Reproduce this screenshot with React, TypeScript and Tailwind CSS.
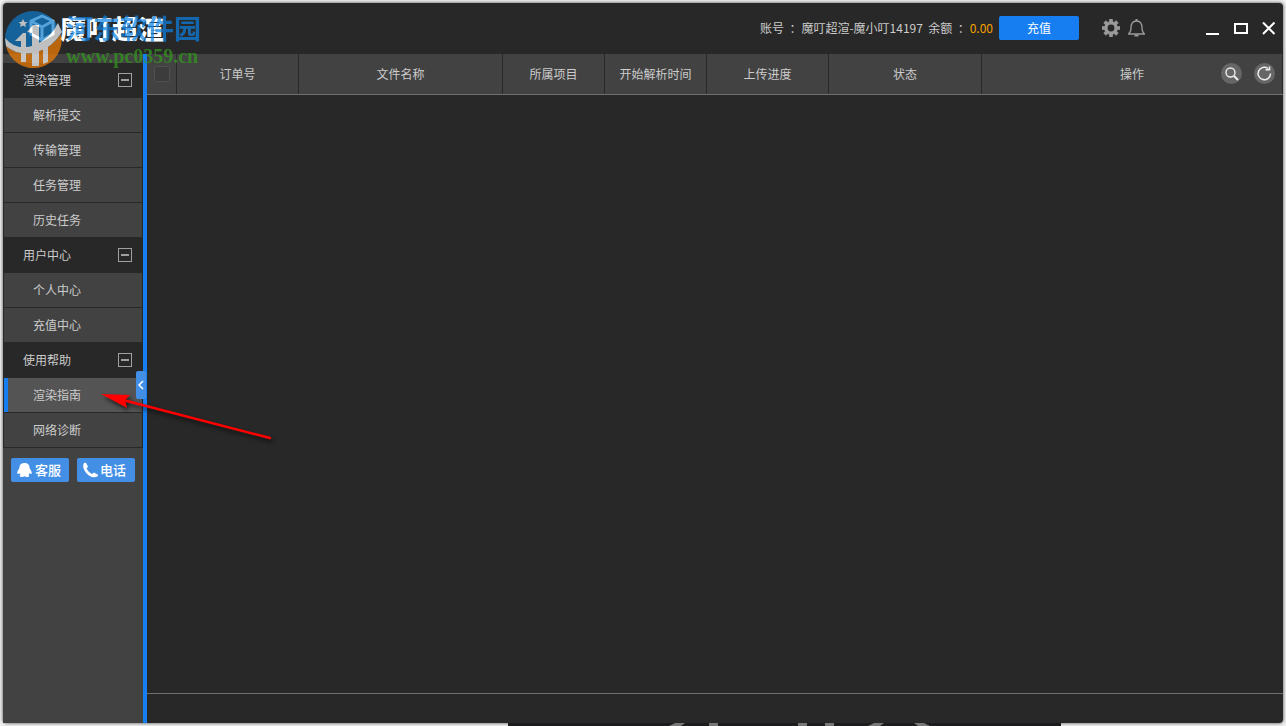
import { useState } from "react";

type Group = { title: string; items: string[] };

const groups: Group[] = [
  { title: "渲染管理", items: ["解析提交", "传输管理", "任务管理", "历史任务"] },
  { title: "用户中心", items: ["个人中心", "充值中心"] },
  { title: "使用帮助", items: ["渲染指南", "网络诊断"] },
];

const columns = [
  { label: "订单号", width: "w-[122px]" },
  { label: "文件名称", width: "w-[204px]" },
  { label: "所属项目", width: "w-[102px]" },
  { label: "开始解析时间", width: "w-[102px]" },
  { label: "上传进度", width: "w-[122px]" },
  { label: "状态", width: "w-[153px]" },
];

function Logo() {
  return (
    <div className="relative flex h-[50px] items-center pl-[25px]">
      <svg width="28" height="30" viewBox="0 0 28 30" fill="none" stroke="#fff" strokeWidth="3" strokeLinejoin="round">
        <path d="M14 3 25 8v13l-11 6L3 21V8z" />
        <path d="M3 8l11 6 11-6M14 14v13" />
      </svg>
      <h1 className="ml-1 whitespace-nowrap text-[26px] leading-8 font-black text-white">魔叮超渲</h1>

      {/* download site stamp over the logo */}
      <div className="pointer-events-none absolute top-[7px] left-[2px] z-20 flex opacity-70">
        <svg width="57" height="58" viewBox="0 0 57 58">
          <circle cx="28" cy="29" r="28" fill="#0d7bcb" />
          <path d="M1 36Q14 47 32 42 46 38 56 24A28 28 0 0 1 1 36z" fill="#f68004" />
          <path d="M0 28Q12 42 30 35 46 28 53 13L57 22Q47 38 32 42 14 47 1 36z" fill="#fff" />
          <path d="M10 31l8-8h3v29h-5V31z" fill="#fff" />
          <path d="M22 22l6-7h6v41h-7V23z" fill="#fff" />
          <path d="M38 36h5v16l-5 2z" fill="#fff" />
          <path d="M18 9l1.500 3h3l-2.300 2 .8 3-3-1.600-3 1.600.8-3-2.300-2h3z" fill="#fff" />
        </svg>
        <div className="whitespace-nowrap pl-[2px]">
          <p className="pl-[2px] text-[27px] leading-[36px] font-bold text-[#0c83e4]">河东软件园</p>
          <p className="pl-[2px] font-['Liberation_Serif',serif] text-[20px] leading-5 font-bold text-[#329d1c]">www.pc0359.cn</p>
        </div>
      </div>
    </div>
  );
}

function TitleBar() {
  return (
    <header className="flex h-[51px] shrink-0 justify-between">
      <Logo />
      <div className="flex h-[50px] items-center">
        <p className="whitespace-pre">
          账号&nbsp; ：魔叮超渲-魔小叮14197&nbsp; 余额&nbsp; ：<span className="text-[#f5a000]">0.00</span>
        </p>
        <button className="ml-[6px] h-6 w-20 rounded-xs bg-[#177ef2] text-white">充值</button>
        <button aria-label="设置" className="ml-[22px]">
          <svg width="20" height="20" viewBox="0 0 20 20">
            <g fill="#999">
              <path d="M8.2 1h3.6v18H8.2z" />
              <path d="M8.2 1h3.6v18H8.2z" transform="rotate(45 10 10)" />
              <path d="M8.2 1h3.6v18H8.2z" transform="rotate(90 10 10)" />
              <path d="M8.2 1h3.6v18H8.2z" transform="rotate(135 10 10)" />
              <circle cx="10" cy="10" r="6.8" />
            </g>
            <circle cx="10" cy="10" r="3.4" fill="#282828" />
          </svg>
        </button>
        <button aria-label="消息" className="ml-[6px]">
          <svg width="19" height="20" viewBox="0 0 19 20" fill="none" stroke="#999" strokeWidth="1.3">
            <path d="M1.5 16q2.5-2 2.5-6 0-7 5.500-7T15 10q0 4 2.500 6z" strokeLinejoin="round" />
            <path d="M9.500 1v2M7.500 17.500h4" strokeWidth="2" />
          </svg>
        </button>
        <button aria-label="最小化" className="ml-[58px]">
          <svg width="16" height="16" viewBox="0 0 16 16">
            <path d="M2 14h13" stroke="#fff" strokeWidth="2" />
          </svg>
        </button>
        <button aria-label="最大化" className="ml-[13px]">
          <svg width="16" height="16" viewBox="0 0 16 16">
            <path d="M2 4h12v9H2z" fill="none" stroke="#fff" strokeWidth="2" />
          </svg>
        </button>
        <button aria-label="关闭" className="mr-[6px] ml-[12px]">
          <svg width="16" height="16" viewBox="0 0 16 16">
            <path d="M2 2.500l11.500 11.500M13.500 2.500L2 14" stroke="#fff" strokeWidth="2" />
          </svg>
        </button>
      </div>
    </header>
  );
}

function Sidebar() {
  const [active, setActive] = useState("渲染指南");
  const [closed, setClosed] = useState<string[]>([]);

  function toggle(title: string) {
    setClosed((c) => (c.includes(title) ? c.filter((t) => t !== title) : [...c, title]));
  }

  return (
    <aside className="relative flex w-36 shrink-0 flex-col border-r-4 border-[#177ef2] bg-[#424242] pt-[9px]">
      <nav className="bg-[#282828] px-px">
        {groups.map((g) => (
          <section key={g.title}>
            <div className="flex h-[35px] items-center justify-between pr-[10px] pb-px pl-[19px]">
              <h2>{g.title}</h2>
              <button
                aria-label={g.title}
                onClick={() => toggle(g.title)}
                className="flex h-[14px] w-[14px] items-center justify-center border border-[#a0a0a0]"
              >
                <span className="h-[2px] w-2 bg-[#a0a0a0]" />
              </button>
            </div>
            {!closed.includes(g.title) && (
              <ul>
                {g.items.map((item) => (
                  <li key={item} className="border-b border-[#282828]">
                    <a
                      href="#"
                      onClick={() => setActive(item)}
                      className={
                        item === active
                          ? "flex h-[34px] items-center border-l-4 border-[#177ef2] bg-[#545454] pl-[25px]"
                          : "flex h-[34px] items-center bg-[#424242] pl-[29px]"
                      }
                    >
                      {item}
                    </a>
                  </li>
                ))}
              </ul>
            )}
          </section>
        ))}
      </nav>

      <div className="flex gap-2 px-2 pt-[10px] text-[13px] font-medium text-white">
        <button className="flex h-6 flex-1 items-center gap-[2px] rounded-xs bg-[#448fe6] pl-[5px]">
          <svg width="17" height="16" viewBox="0 0 15 16" fill="#fff" preserveAspectRatio="none">
            <path d="M7.500 1C4.500 1 3 3 3 5.500c0 1-.4 1.500-1 2.500-.9 1.500-1.200 3.200-.5 4 .5.3 1-.5 1.300-1 .3.900.7 1.400 1.200 2-1 .4-1 2 1.200 2 1 0 1.700-.3 2.300-.7.600.4 1.300.7 2.300.7 2.200 0 2.200-1.600 1.200-2 .5-.6.900-1.100 1.200-2 .3.500.8 1.300 1.300 1 .7-.8.4-2.500-.5-4-.6-1-1-1.500-1-2.500C12 3 10.500 1 7.500 1z" />
          </svg>
          客服
        </button>
        <button className="flex h-6 flex-1 items-center gap-px rounded-xs bg-[#448fe6] pl-[5px]">
          <svg width="17" height="16" viewBox="0 0 17 16" fill="#fff">
            <path d="M2 1l2-.2 2 4-1.500 1.800q2 4 5.500 5.400l2-1.500 4 2.200-.3 1.600q-3 2-7 .2Q3 11.500 1.300 5.500 1 2.500 2 1z" />
          </svg>
          电话
        </button>
      </div>

      {/* collapse handle sits over the blue edge */}
      <button
        aria-label="收起"
        className="absolute top-[317px] right-[-3px] z-10 flex h-7 w-[10px] items-center justify-center rounded-xs bg-[#448fe6]"
      >
        <svg width="6" height="10" viewBox="0 0 6 10" fill="none" stroke="#fff" strokeWidth="1.500">
          <path d="M5 1L1 5l4 4" />
        </svg>
      </button>
    </aside>
  );
}

function OrderTable() {
  return (
    <table className="w-full table-fixed border-separate border-spacing-0 border-b border-[#707070] bg-[#424242]">
      <thead>
        <tr className="h-10">
          <th className="w-[30px] border-r border-[#282828] p-0">
            <input
              type="checkbox"
              aria-label="全选"
              className="mx-auto block h-4 w-4 appearance-none rounded-xs border border-[#505050] bg-[#3c3c3c]"
            />
          </th>
          {columns.map((c) => (
            <th key={c.label} className={`${c.width} border-r border-[#282828] p-0 font-normal`}>
              {c.label}
            </th>
          ))}
          <th className="border-r border-[#282828] p-0 font-normal">
            <div className="grid grid-cols-[1fr_auto_1fr] items-center">
              <span className="col-start-2">操作</span>
              <div className="flex justify-end gap-3 pr-[7px] pb-[2px]">
                <button aria-label="搜索">
                  <svg width="21" height="21" viewBox="0 0 21 21" fill="none" stroke="#eee">
                    <circle cx="10.500" cy="10.500" r="10.500" fill="#666" stroke="none" />
                    <circle cx="9.500" cy="9.500" r="4.500" strokeWidth="1.400" />
                    <path d="M13 13l4 4" strokeWidth="2" />
                  </svg>
                </button>
                <button aria-label="刷新">
                  <svg width="21" height="21" viewBox="0 0 21 21" fill="none" stroke="#eee" strokeWidth="1.500">
                    <circle cx="10.500" cy="10.500" r="10.500" fill="#666" stroke="none" />
                    <path d="M16.500 10.500a6.200 6.200 0 1 1-2.500-5" />
                    <path d="M15.500 3.500v3.300h-4" />
                  </svg>
                </button>
              </div>
            </div>
          </th>
        </tr>
      </thead>
    </table>
  );
}

export default function App() {
  return (
    <div className="relative flex min-h-screen flex-col bg-[#f0f0f0] p-[3px] font-['Noto_Sans_CJK_SC',sans-serif] text-xs leading-4 text-[#ccc]">
      <div className="relative z-10 flex flex-1 flex-col rounded-[4px] bg-[#282828] shadow-[0_0_3px_1px_#888]">
        <TitleBar />
        <div className="flex flex-1">
          <Sidebar />
          <main className="flex min-w-0 flex-1 flex-col">
            <OrderTable />
            <div className="flex-1" />
            <footer className="h-[30px] border-t border-[#707070]" />
          </main>
        </div>

        {/* pointer to the guide entry */}
        <svg
          className="pointer-events-none absolute top-[380px] left-[95px] z-20 drop-shadow-[2px_3px_2px_#000a]"
          width="180"
          height="64"
          viewBox="0 0 180 64"
        >
          <path d="M25 17L172 55" stroke="#f00" strokeWidth="2.500" strokeLinecap="round" />
          <path d="M3 11l29 1-5 5 2 8z" fill="#f00" />
        </svg>
      </div>

      {/* edge of the banner lying behind the window */}
      <div className="absolute bottom-0 left-[508px] z-20 h-[3px] w-[43%] bg-[#1c1c1e]">
        <svg width="430" height="3" viewBox="0 0 430 3" fill="#777">
          <path d="M167 0h10l-4 3h-12zM201 0h9v3h-9zM290 0h9v3h-9zM317 0h9v3h-9zM366 0h10l-4 3h-12zM406 0h10l6 3h-12z" />
        </svg>
      </div>
    </div>
  );
}
